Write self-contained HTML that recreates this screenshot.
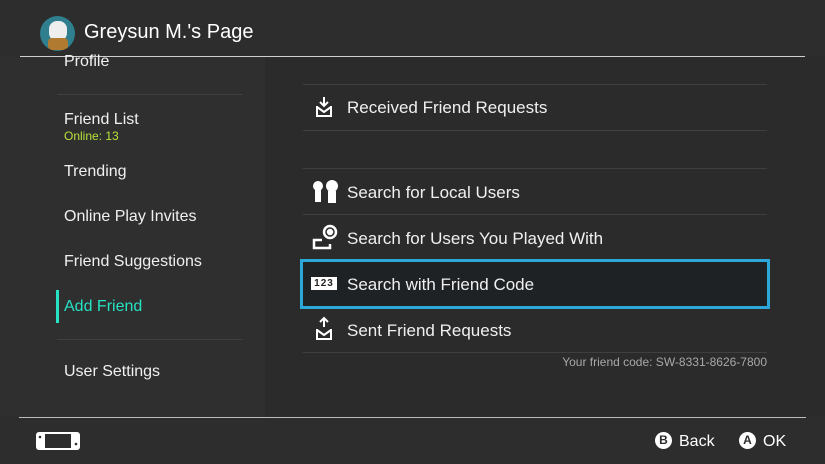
<!DOCTYPE html>
<html><head><style>
body{margin:0;width:825px;height:464px;background:#2d2d2d;font-family:"Liberation Sans",sans-serif;color:#fff;position:relative;overflow:hidden}
.a{position:absolute}
.side{left:0;top:57px;width:265px;height:360px;background:#2f2f2f}
.main{left:265px;top:57px;width:560px;height:360px;background:#2b2b2b}
.l{position:absolute;left:64px;font-size:16px;color:#f0f0f0}
.hr{position:absolute;height:1px;background:#3f3f3f}
.r{position:absolute;left:347px;font-size:17px;color:#f0f0f0}
.ic{position:absolute;left:312px}
</style></head><body>
<div class="a side"></div><div class="a main"></div>
<div class="a" style="left:40px;top:16px;width:35px;height:35px;border-radius:50%;background:#2f7f8f;overflow:hidden">
<div style="position:absolute;left:9px;top:5px;width:18px;height:20px;background:#eee;border-radius:8px"></div>
<div style="position:absolute;left:8px;top:22px;width:20px;height:12px;background:#b07a30;border-radius:4px"></div></div>
<div class="a" style="left:84px;top:21px;font-size:20px;color:#fff">Greysun M.'s Page</div>
<div class="a" style="left:20px;top:56px;width:785px;height:1px;background:#cfcfcf"></div>
<div class="l" style="top:53px">Profile</div>
<div class="hr" style="left:57px;top:94px;width:186px"></div>
<div class="l" style="top:111px">Friend List</div>
<div class="l" style="top:129px;font-size:12px;color:#b7e33a">Online: 13</div>
<div class="l" style="top:163px">Trending</div>
<div class="l" style="top:208px">Online Play Invites</div>
<div class="l" style="top:253px">Friend Suggestions</div>
<div class="a" style="left:56px;top:290px;width:3px;height:33px;background:#27e3c4"></div>
<div class="l" style="top:298px;color:#27e3c4">Add Friend</div>
<div class="hr" style="left:57px;top:339px;width:186px"></div>
<div class="l" style="top:363px">User Settings</div>

<div class="hr" style="left:303px;top:84px;width:464px"></div>
<div class="hr" style="left:303px;top:130px;width:464px"></div>
<div class="hr" style="left:303px;top:168px;width:464px"></div>
<div class="hr" style="left:303px;top:214px;width:464px"></div>
<div class="hr" style="left:303px;top:352px;width:464px"></div>
<svg class="ic" style="top:95px" width="24" height="24" viewBox="0 0 24 24" fill="none" stroke="#fff" stroke-width="2"><path d="M12 2v9M8 7l4 4 4-4"/><path d="M5 11v10h14V11M5 12l7 5 7-5"/></svg>
<div class="r" style="top:98px">Received Friend Requests</div>
<svg class="ic" style="top:180px" width="28" height="24" viewBox="0 0 28 24" fill="#fff"><circle cx="6" cy="6" r="5"/><path d="M3 10h6v12H3z"/><circle cx="20" cy="6" r="6"/><path d="M16 11h8v12h-8z"/></svg>
<div class="r" style="top:183px">Search for Local Users</div>
<svg class="ic" style="top:224px" width="28" height="26" viewBox="0 0 28 26" fill="none" stroke="#fff" stroke-width="2.5"><circle cx="18" cy="8" r="6"/><path d="M10 16H2v8h16v-4"/><circle cx="18" cy="8" r="2" fill="#fff"/></svg>
<div class="r" style="top:229px">Search for Users You Played With</div>
<div class="a" style="left:300px;top:259px;width:464px;height:44px;border:3px solid #2ba7d8;background:#1f2224"></div>
<div class="a" style="left:311px;top:277px;width:26px;height:13px;background:#fff;color:#1f2224;font-size:10px;font-weight:bold;text-align:center;line-height:13px;letter-spacing:1px">123</div>
<div class="r" style="top:275px">Search with Friend Code</div>
<svg class="ic" style="top:316px" width="24" height="26" viewBox="0 0 24 26" fill="none" stroke="#fff" stroke-width="2"><path d="M12 11V2M8 6l4-4 4 4"/><path d="M5 13v10h14V13M5 14l7 5 7-5"/></svg>
<div class="r" style="top:321px">Sent Friend Requests</div>
<div class="a" style="right:58px;top:355px;font-size:12px;color:#a8a8a8">Your friend code: SW-8331-8626-7800</div>

<div class="a" style="left:19px;top:417px;width:787px;height:1px;background:#bcbcbc"></div>
<svg class="a" style="left:35px;top:431px" width="46" height="20" viewBox="0 0 46 20"><rect x="1" y="1" width="44" height="18" rx="3" fill="#fff"/><rect x="10" y="3" width="26" height="14" fill="#2d2d2d"/><circle cx="5" cy="6" r="1.3" fill="#2d2d2d"/><circle cx="41" cy="13" r="1.3" fill="#2d2d2d"/></svg>
<div class="a" style="left:655px;top:432px;width:17px;height:17px;border-radius:50%;background:#fff;color:#2d2d2d;font-size:12px;font-weight:bold;text-align:center;line-height:17px">B</div>
<div class="a" style="left:679px;top:433px;font-size:16px">Back</div>
<div class="a" style="left:739px;top:432px;width:17px;height:17px;border-radius:50%;background:#fff;color:#2d2d2d;font-size:12px;font-weight:bold;text-align:center;line-height:17px">A</div>
<div class="a" style="left:763px;top:433px;font-size:16px">OK</div>
</body></html>
